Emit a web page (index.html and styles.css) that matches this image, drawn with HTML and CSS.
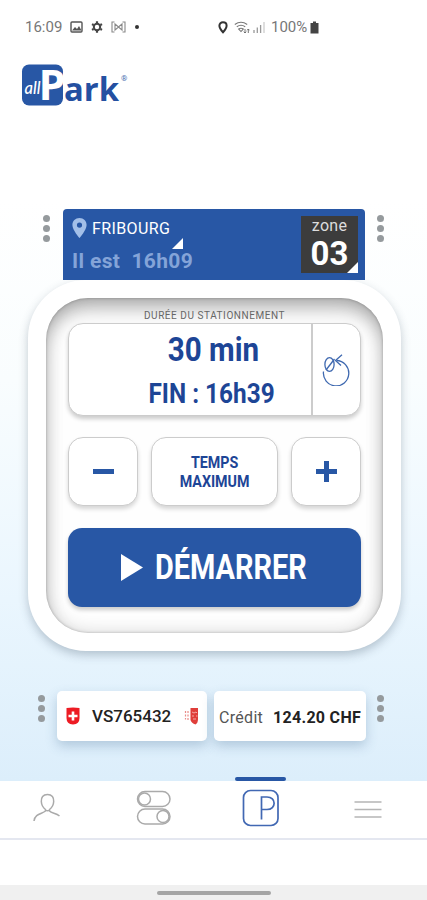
FILE: index.html
```
<!DOCTYPE html>
<html lang="fr">

<head>
    <meta charset="UTF-8">
    <meta name="viewport" content="width=device-width, initial-scale=1.0">
    <title>allPark</title>
    <link rel="stylesheet" href="styles.css">
</head>

<body>
    <div class="app">
        <div class="status-bar">
            <div class="status-left">
                <span class="status-text time">16:09</span>
                <svg width="13" height="12" viewBox="0 0 13 12">
                    <rect x="1" y="1" width="11" height="10" rx="1" fill="none" stroke="#555" stroke-width="1.4" />
                    <path d="M2 9.5 L5 6 L7 8 L9 5 L11.5 9.5 Z" fill="#555" />
                </svg>
                <svg width="12" height="12" viewBox="0 0 12 12">
                    <circle cx="6" cy="6" r="3.2" fill="none" stroke="#444" stroke-width="2" />
                    <path d="M6 0.3V2M6 10v1.7M1 3.1l1.6.9M9.4 8l1.6.9M1 8.9L2.6 8M9.4 4L11 3.1" stroke="#444" stroke-width="2.2" />
                </svg>
                <svg width="15" height="12" viewBox="0 0 15 12">
                    <path d="M3.5 1H1v10h2.5M11.5 1H14v10h-2.5M4 3l3.5 3L11 3v6L7.5 6L4 9Z" fill="none" stroke="#888" stroke-width="1.1" />
                </svg>
                <span class="status-dot"></span>
            </div>
            <div class="status-right">
                <svg width="10" height="13" viewBox="0 0 10 13">
                    <path d="M5 1.3C2.9 1.3 1.4 2.8 1.4 4.7C1.4 7.3 5 11.2 5 11.2S8.6 7.3 8.6 4.7C8.6 2.8 7.1 1.3 5 1.3Z" fill="none" stroke="#333" stroke-width="2" />
                </svg>
                <svg class="wifi" width="16" height="13" viewBox="0 0 16 13">
                    <path d="M.8 3.5Q7 -1 13.2 3.5M2.8 5.7Q7 2.7 11.2 5.7M4.7 8Q7 6.4 9.3 8L7 10.5Z" fill="none" stroke="#777" stroke-width="1.1" />
                    <path d="M11 8v4M9.7 10.7L11 12l1.3-1.3M14.3 12V8M13 9.3L14.3 8l1.2 1.3" fill="none" stroke="#666" stroke-width=".9" />
                </svg>
                <svg class="signal" width="13" height="12" viewBox="0 0 13 12">
                    <path d="M1 9v3M4.3 6.5V12M7.6 4v8" stroke="#999" stroke-width="1.3" />
                    <path d="M11 1v11" stroke="#ccc" stroke-width="1.3" />
                </svg>
                <span class="status-text percent">100%</span>
                <svg width="9" height="13" viewBox="0 0 9 13">
                    <path d="M3 .5h3V2h2.5v10.5H.5V2H3Z" fill="#444" />
                </svg>
            </div>
        </div>

        <header class="logo">
            <svg width="110" height="46" viewBox="0 0 110 46">
                <rect x="1" y="2.500" width="41" height="41" rx="7" fill="#2857a5" />
                <text class="logo-p" x="17.500" y="38" textLength="27" lengthAdjust="spacingAndGlyphs">P</text>
                <text class="logo-all" x="3.5" y="32" textLength="16" lengthAdjust="spacingAndGlyphs">all</text>
                <text class="logo-ark" x="43" y="38.500" textLength="55" lengthAdjust="spacingAndGlyphs">ark</text>
                <text class="logo-reg" x="100" y="19">®</text>
            </svg>
        </header>

        <main>
            <div class="location-row">
                <span class="dots"><i></i><i></i><i></i></span>
                <section class="location">
                    <div class="place">
                        <div class="city">
                            <svg width="15" height="20" viewBox="0 0 15 20">
                                <path fill-rule="evenodd" d="M7.5 0C3.3 0 .4 3 .4 7C.4 12 7.5 20 7.5 20S14.6 12 14.6 7C14.6 3 11.7 0 7.5 0ZM7.5 4.5a2.6 2.6 0 1 1 0 5.2a2.6 2.6 0 1 1 0-5.2Z" fill="#a3bfe8" />
                            </svg>
                            <span>FRIBOURG</span>
                        </div>
                        <div class="clock">Il est&nbsp; 16h09</div>
                        <span class="corner corner-city"></span>
                    </div>
                    <div class="zone">
                        <span class="zone-label">zone</span>
                        <span class="zone-number">03</span>
                        <span class="corner corner-zone"></span>
                    </div>
                </section>
                <span class="dots"><i></i><i></i><i></i></span>
            </div>

            <section class="panel">
                <div class="panel-inner">
                    <div class="panel-label">DURÉE DU STATIONNEMENT</div>
                    <div class="display">
                        <div class="display-text">
                            <div class="duration"><span>30 min</span></div>
                            <div class="end"><span>FIN : 16h39</span></div>
                        </div>
                        <div class="reset">
                            <svg width="30" height="32" viewBox="0 0 30 32" fill="none" stroke="#3f69b0" stroke-width="1.3">
                                <ellipse cx="7.5" cy="10.500" rx="4.600" ry="6.800" />
                                <path d="M4 16L12.500 5" />
                                <path d="M1.500 17.500A12.700 12.700 0 1 0 14.500 6.500" />
                                <path d="M20 .8L13.500 6.500L19 11.500" />
                            </svg>
                        </div>
                    </div>
                    <div class="buttons">
                        <button class="btn"><span class="minus"></span></button>
                        <button class="btn btn-max"><span>TEMPS<br>MAXIMUM</span></button>
                        <button class="btn"><span class="plus"></span></button>
                    </div>
                    <button class="start">
                        <svg width="22" height="27" viewBox="0 0 22 27">
                            <path d="M0 0L22 13.5L0 27Z" fill="#fff" />
                        </svg>
                        <span>DÉMARRER</span>
                    </button>
                </div>
            </section>

            <div class="info-row">
                <span class="dots"><i></i><i></i><i></i></span>
                <div class="card plate">
                    <svg width="14" height="18" viewBox="0 0 14 18">
                        <path d="M.5 1Q7 -.2 13.5 1V11Q13.5 17 7 17.5Q.5 17 .5 11Z" fill="#ed1c24" />
                        <path d="M7 4.5v9M2.5 9h9" stroke="#fff" stroke-width="2.6" />
                    </svg>
                    <span class="plate-number">VS765432</span>
                    <svg width="15" height="18" viewBox="0 0 15 18">
                        <path d="M6.5 1H14V12Q14 16 11.500 17.500Q7.500 16 6.500 13Z" fill="#df3e3a" />
                        <path d="M1.500 4v2M1.500 7.500v2M1.500 11v1.500M4 4v2M4 7.500v2M4 11v2" stroke="#e98b88" stroke-width="1.2" />
                        <path d="M8 5l2 1l2-1l1 1M8 9h2M12 9h1.500M9 12h3" stroke="#f7c4c2" stroke-width=".8" fill="none" />
                    </svg>
                </div>
                <div class="card credit">
                    <span class="credit-label">Crédit</span>
                    <span class="credit-value">124.20 CHF</span>
                </div>
                <span class="dots"><i></i><i></i><i></i></span>
            </div>
        </main>

        <nav class="nav">
            <a class="nav-item">
                <svg width="28" height="30" viewBox="0 0 28 30" fill="none" stroke="#aaa" stroke-width="1.5">
                    <path d="M14.500 1.500C10 1.500 8 4.500 8.300 8.500C8.500 12 10.500 15 12.500 16.500V18C9 21 2 20.500 1 28M14.500 1.500C19 1.500 21 4.500 20.700 8.500C20.500 12 18.500 15 16.500 16.500V18C18.500 20.500 23 20 26.500 23M12.500 17Q14.500 18.500 16.500 17" />
                </svg>
            </a>
            <a class="nav-item">
                <svg width="36" height="36" viewBox="0 0 36 36" fill="none" stroke="#aaa" stroke-width="1.5">
                    <rect x="1.5" y="1.5" width="32.5" height="15" rx="7.5" />
                    <circle cx="8.5" cy="9" r="6" />
                    <rect x="1.5" y="19" width="32.5" height="15" rx="7.5" />
                    <circle cx="27" cy="26.5" r="6" />
                </svg>
            </a>
            <a class="nav-item active">
                <svg width="38" height="38" viewBox="0 0 38 38" fill="none" stroke="#4168b3" stroke-width="1.7">
                    <rect x="1.5" y="1.5" width="34.5" height="35" rx="7" />
                    <path d="M19.5 30.5V8H25C34.500 8 34.500 20.500 25 20.500H19.5" />
                </svg>
            </a>
            <a class="nav-item">
                <svg width="28" height="20" viewBox="0 0 28 20" stroke="#b5b5b5" stroke-width="1.700">
                    <path d="M.5 4h27M.5 11.500h27M.5 19h27" />
                </svg>
            </a>
        </nav>

        <footer class="gesture-bar"><span></span></footer>
    </div>
</body>

</html>
```
FILE: styles.css
```
* {
    box-sizing: border-box;
}

body {
    margin: 0;
    font-family: "Roboto", sans-serif;
    background: #fff;
}

button {
    font-family: inherit;
    border: none;
    padding: 0;
}

svg {
    display: block;
    flex: none;
}

.app {
    width: 427px;
    height: 900px;
    display: flex;
    flex-direction: column;
    overflow: hidden;
    background: linear-gradient(#fff 200px, #f9fdfe 380px, #eaf6fe 600px, #dceefb 781px);
}

/* Status bar */
.status-bar {
    height: 54px;
    padding-left: 25px;
    display: flex;
    align-items: center;
}

.status-left {
    width: 193px;
    display: flex;
    align-items: center;
    gap: 8px;
}

.status-right {
    display: flex;
    align-items: center;
}

.status-text {
    font-size: 15px;
    color: #777;
    line-height: 18px;
}

.time {
    width: 38px;
    margin-right: -1px;
}

.status-dot {
    width: 4px;
    height: 4px;
    margin-left: 1px;
    border-radius: 50%;
    background: #333;
}

.wifi {
    margin-left: 6px;
}

.signal {
    margin: 0 5px 0 3px;
}

.percent {
    width: 39px;
}

/* Logo */
.logo {
    height: 155px;
    padding: 8px 0 0 21px;
}

.logo svg {
    overflow: visible;
}

.logo-p,
.logo-ark {
    font-family: "Open Sans", sans-serif;
    font-weight: 700;
}

.logo-p {
    font-size: 42px;
    fill: #fff;
}

.logo-all {
    font: italic 500 17px "Lato", sans-serif;
    fill: #fff;
}

.logo-ark {
    font-size: 32px;
    fill: #2450a1;
}

.logo-reg {
    font-size: 8px;
    fill: #4a6db0;
}

/* Location header */
.location-row {
    height: 71px;
    padding-left: 43px;
    display: flex;
}

.dots {
    width: 8px;
    padding-top: 6px;
    display: flex;
    flex-direction: column;
    gap: 3px;
}

.dots i {
    width: 7px;
    height: 7px;
    border-radius: 50%;
    background: #959a9d;
}

.location {
    width: 302px;
    height: 71px;
    margin: 0 12px;
    padding: 7px 7px 0 9px;
    display: flex;
    justify-content: space-between;
    background: #2857a5;
    border-radius: 4px 4px 0 0;
}

.place {
    position: relative;
    width: 122px;
}

.city {
    height: 24px;
    display: flex;
    align-items: center;
    gap: 5px;
    color: #fff;
    font-size: 16px;
    letter-spacing: 0.4px;
}

.clock {
    margin-top: 7px;
    font-size: 21px;
    line-height: 28px;
    letter-spacing: 0.35px;
    font-weight: 700;
    color: #84a4d8;
    white-space: nowrap;
}

.zone {
    position: relative;
    width: 57px;
    height: 57px;
    background: #3c3c3c;
    color: #fff;
    text-align: center;
}

.zone-label {
    display: block;
    font-size: 16px;
    line-height: 19px;
    letter-spacing: 0.3px;
    color: #ddd;
}

.zone-number {
    display: block;
    font-size: 33px;
    line-height: 38px;
    font-weight: 700;
}

.corner {
    position: absolute;
    width: 11px;
    height: 11px;
    background: #fff;
    clip-path: polygon(100% 0, 100% 100%, 0 100%);
}

.corner-city {
    right: 11px;
    top: 22px;
}

.corner-zone {
    right: 0;
    bottom: 0;
}

/* Main panel */
.panel {
    width: 373px;
    height: 371px;
    margin-left: 28px;
    padding: 18px;
    border-radius: 58px;
    background: #fff;
    box-shadow: 0 4px 10px rgba(60, 80, 100, 0.3);
}

.panel-inner {
    height: 335px;
    padding: 11px 22px 0;
    border-radius: 42px;
    background: #fefefe;
    box-shadow: inset 0 14px 20px -4px rgba(0, 0, 0, 0.28), inset 0 0 18px rgba(0, 0, 0, 0.16), inset 0 0 3px rgba(0, 0, 0, 0.25);
}

.panel-label {
    height: 14px;
    margin: 0 -10px;
    font-size: 10px;
    line-height: 13px;
    letter-spacing: 0.55px;
    text-align: center;
    white-space: nowrap;
    color: #666;
}

.display {
    height: 93px;
    display: flex;
    border: 1px solid #ccc;
    border-radius: 15px;
    background: #fff;
    box-shadow: 0 3px 4px rgba(0, 0, 0, 0.2);
}

.display-text {
    width: 244px;
    padding-left: 46px;
    border-right: 2px solid #ccc;
    text-align: center;
    color: #1d4596;
    font-weight: 700;
    white-space: nowrap;
}

.display-text span {
    display: inline-block;
}

.duration {
    font-size: 34px;
    line-height: 40px;
    padding-top: 5px;
    height: 50px;
}

.duration span {
    transform: scaleX(0.87);
}

.end {
    margin: 0 -20px;
    font-size: 28px;
    line-height: 40px;
}

.end span {
    transform: translateX(-1px) scaleX(0.87);
}

.reset {
    flex: 1;
    display: flex;
    align-items: center;
    justify-content: center;
}

.buttons {
    margin-top: 21px;
    display: grid;
    grid-template-columns: 70px 127px 70px;
    justify-content: space-between;
}

.btn {
    height: 69px;
    display: flex;
    align-items: center;
    justify-content: center;
    border: 1px solid #ccc;
    border-radius: 15px;
    background: #fff;
    box-shadow: 0 3px 4px rgba(0, 0, 0, 0.16);
}

.btn-max {
    font-size: 17px;
    line-height: 19px;
    font-weight: 700;
    color: #1d4596;
}

.btn-max span {
    transform: scaleX(0.84);
}

.minus,
.plus {
    width: 21px;
    height: 21px;
    background: linear-gradient(#2857a5, #2857a5) center / 100% 5px no-repeat;
}

.plus {
    background: linear-gradient(#2857a5, #2857a5) center / 100% 5px no-repeat,
        linear-gradient(#2857a5, #2857a5) center / 5px 100% no-repeat;
}

.start {
    width: 100%;
    height: 79px;
    margin-top: 22px;
    display: flex;
    align-items: center;
    justify-content: center;
    border-radius: 14px;
    background: #2857a5;
    color: #fff;
    font-size: 35px;
    font-weight: 700;
    box-shadow: 0 3px 4px rgba(0, 0, 0, 0.2);
}

.start span {
    width: 153px;
    margin-left: 12px;
    transform: scaleX(0.825);
    transform-origin: left;
    text-align: left;
}

/* Plate and credit */
.info-row {
    height: 90px;
    margin-top: 40px;
    padding-left: 38px;
    display: flex;
}

.info-row .dots {
    padding-top: 4px;
}

.card {
    height: 50px;
    display: flex;
    align-items: center;
    border-radius: 5px;
    background: #fff;
    box-shadow: 0 5px 12px rgba(70, 110, 150, 0.3);
}

.plate {
    width: 150px;
    margin-left: 11px;
    padding-left: 9px;
    color: #222;
}

.plate-number {
    width: 78px;
    margin: 0 14px 0 12px;
    font-size: 17px;
    font-weight: 500;
}

.credit {
    width: 152px;
    margin: 0 11px 0 7px;
    padding: 3px 0 0 5px;
    font-size: 16px;
    color: #222;
    white-space: nowrap;
}

.credit-label {
    width: 54px;
    letter-spacing: 0.3px;
    color: #555;
}

.credit-value {
    font-weight: 700;
    letter-spacing: 0.3px;
}

/* Bottom navigation */
.nav {
    height: 59px;
    padding-bottom: 4px;
    display: grid;
    grid-template-columns: repeat(4, 107px);
    background: #fff;
    border-bottom: 2px solid #e4e7f0;
}

.nav-item {
    position: relative;
    display: flex;
    align-items: center;
    justify-content: center;
    margin-left: -14px;
}

.active::before {
    content: "";
    position: absolute;
    top: -4px;
    width: 51px;
    height: 4px;
    border-radius: 2px;
    background: #2857a5;
}

.gesture-bar {
    height: 60px;
    padding-top: 51px;
    background: linear-gradient(#fff 45px, #f0f0f0 45px);
}

.gesture-bar span {
    display: block;
    width: 114px;
    height: 4px;
    margin-left: 157px;
    border-radius: 2px;
    background: #a5a5a5;
}
```
